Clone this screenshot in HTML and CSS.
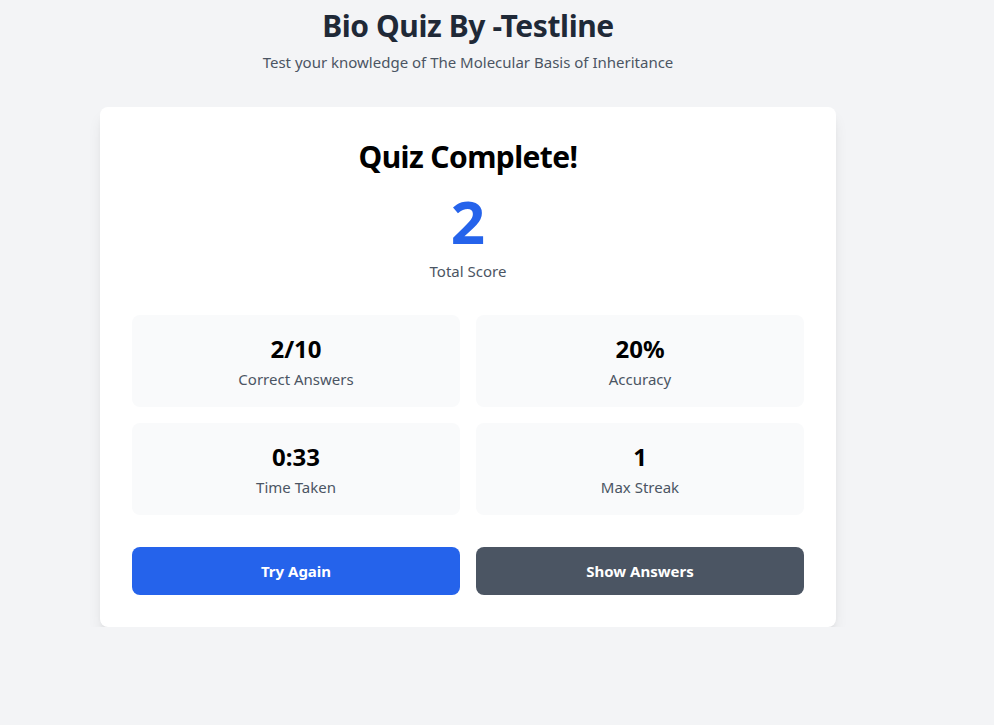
FILE: index.html
```html
<!DOCTYPE html>
<html lang="en">
<head>
<meta charset="utf-8">
<title>Bio Quiz By -Testline</title>
<link rel="stylesheet" href="styles.css">
</head>
<body>
<div class="page">
  <header class="header">
    <h1 class="title">Bio Quiz By -Testline</h1>
    <p class="subtitle">Test your knowledge of The Molecular Basis of Inheritance</p>
  </header>
  <main class="card">
    <h2 class="card-title">Quiz Complete!</h2>
    <div class="score">2</div>
    <div class="score-label">Total Score</div>
    <div class="stats">
      <div class="stat"><div class="stat-value">2/10</div><div class="stat-label">Correct Answers</div></div>
      <div class="stat"><div class="stat-value">20%</div><div class="stat-label">Accuracy</div></div>
      <div class="stat"><div class="stat-value">0:33</div><div class="stat-label">Time Taken</div></div>
      <div class="stat"><div class="stat-value">1</div><div class="stat-label">Max Streak</div></div>
    </div>
    <div class="actions">
      <button class="btn btn-primary">Try Again</button>
      <button class="btn btn-secondary">Show Answers</button>
    </div>
  </main>
</div>
</body>
</html>
```
FILE: styles.css
```css
* { box-sizing: border-box; }
html, body { margin: 0; padding: 0; }
body {
  background: #f3f4f6;
  font-family: "Noto Sans", "Open Sans", sans-serif;
  color: #000;
}
.page {
  width: 736px;
  margin: 0 0 0 100px;
  padding-top: 8px;
}
.header { text-align: center; margin-bottom: 33px; }
.title {
  margin: 0;
  font-size: 30px;
  line-height: 36px;
  font-weight: 700;
  letter-spacing: -0.4px;
  color: #1f2937;
}
.subtitle {
  margin: 6px 0 0;
  font-size: 15px;
  line-height: 24px;
  color: #4b5563;
}
.card {
  background: #fff;
  border-radius: 8px;
  box-shadow: 0 10px 15px -3px rgba(0,0,0,0.1), 0 4px 6px -4px rgba(0,0,0,0.1);
  padding: 32px;
  text-align: center;
}
.card-title {
  margin: 0;
  font-size: 30px;
  line-height: 36px;
  font-weight: 700;
  letter-spacing: -0.6px;
}
.score {
  margin-top: 16px;
  font-size: 60px;
  line-height: 60px;
  font-weight: 700;
  color: #2563eb;
}
.score-label {
  margin-top: 8px;
  font-size: 15px;
  line-height: 24px;
  color: #4b5563;
}
.stats {
  margin-top: 32px;
  display: grid;
  grid-template-columns: 1fr 1fr;
  gap: 16px;
}
.stat {
  background: #f9fafb;
  border-radius: 8px;
  padding: 18px 16px 16px;
}
.stat-value {
  font-size: 24px;
  line-height: 32px;
  font-weight: 700;
}
.stat-label {
  margin-top: 2px;
  font-size: 15px;
  line-height: 24px;
  color: #4b5563;
}
.actions {
  margin-top: 32px;
  display: grid;
  grid-template-columns: 1fr 1fr;
  gap: 16px;
}
.btn {
  height: 48px;
  border: 0;
  border-radius: 8px;
  color: #fff;
  font-family: inherit;
  font-size: 15px;
  font-weight: 700;
}
.btn-primary { background: #2563eb; }
.btn-secondary { background: #4b5563; }
```
